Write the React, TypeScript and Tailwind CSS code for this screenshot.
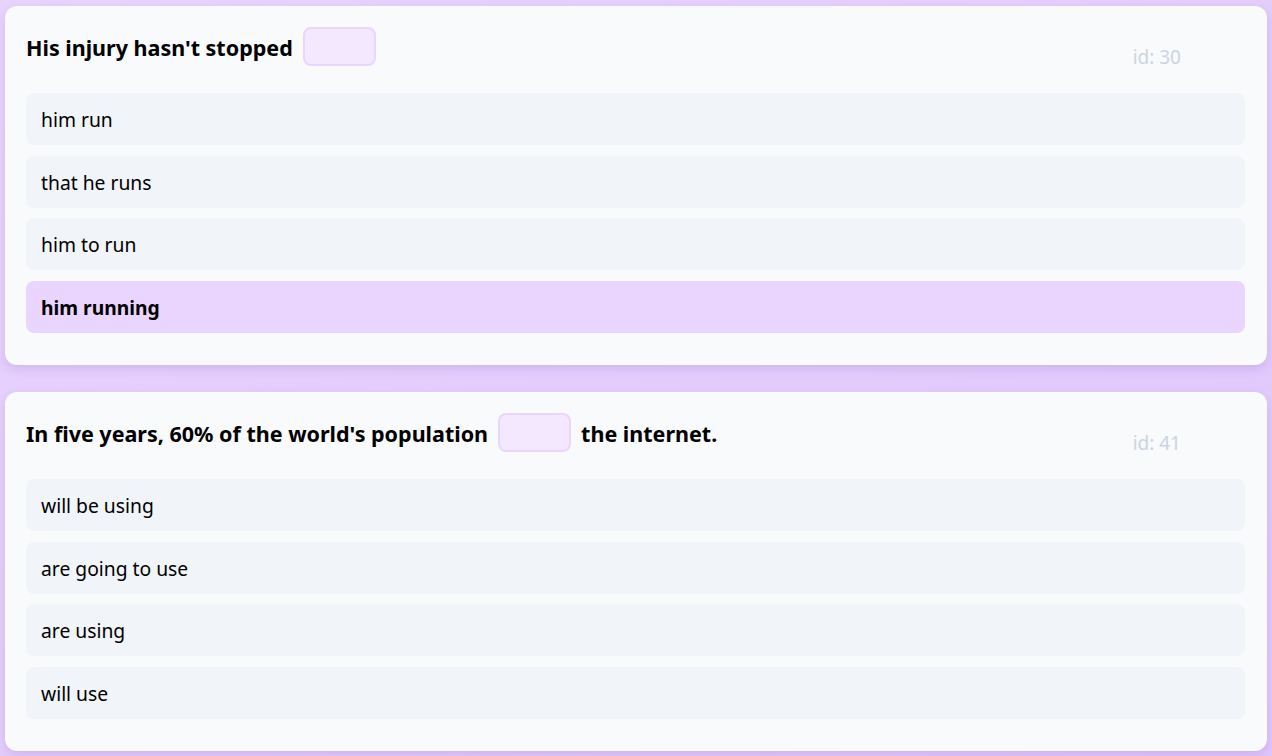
import React from 'react';

type Question = {
  id: number;
  before: string;
  after?: string;
  options: string[];
  selected?: number;
};

const questions: Question[] = [
  {
    id: 30,
    before: "His injury hasn't stopped",
    options: ['him run', 'that he runs', 'him to run', 'him running'],
    selected: 3,
  },
  {
    id: 41,
    before: "In five years, 60% of the world's population",
    after: 'the internet.',
    options: ['will be using', 'are going to use', 'are using', 'will use'],
  },
];

const QuestionCard: React.FC<{ q: Question }> = ({ q }) => {
  return (
    <div className="relative bg-[#f8fafc] rounded-xl shadow-[0_4px_10px_rgba(120,80,170,0.18)] pt-[21px] pb-[32px] pl-[21px] pr-[22px]">
      <span className="absolute right-[86px] top-[37px] text-[19px] text-[#cbd5e1]">id: {q.id}</span>
      <div className="flex items-center h-[39px] text-[21.5px] font-bold text-black">
        <span className="pt-[3px]">{q.before}</span>
        <span className="mx-[10px] w-[73px] h-[39px] rounded-lg bg-[#f3e8ff] border-2 border-[#ead5ff]"></span>
        {q.after && <span className="pt-[3px]">{q.after}</span>}
      </div>
      <div className="mt-[27px] flex flex-col gap-[10.7px]">
        {q.options.map((opt, i) => (
          <div
            key={opt}
            className={
              i === q.selected
                ? 'h-[52px] flex items-center pl-[15px] pt-[3px] rounded-lg bg-[#ead5ff] font-bold text-[19.3px] text-black'
                : 'h-[52px] flex items-center pl-[15px] pt-[3px] rounded-lg bg-[#f1f4f9] text-[19.3px] text-black'
            }
          >
            {opt}
          </div>
        ))}
      </div>
    </div>
  );
};

export default function App() {
  return (
    <div
      className="min-h-screen bg-gradient-to-br from-[#e8d3fe] to-[#dfc6fb] px-[5px] pt-[6px] pb-[20px] flex flex-col gap-[27px]"
      style={{ fontFamily: '"Noto Sans", "Open Sans", sans-serif' }}
    >
      {questions.map((q) => (
        <QuestionCard key={q.id} q={q} />
      ))}
    </div>
  );
}
